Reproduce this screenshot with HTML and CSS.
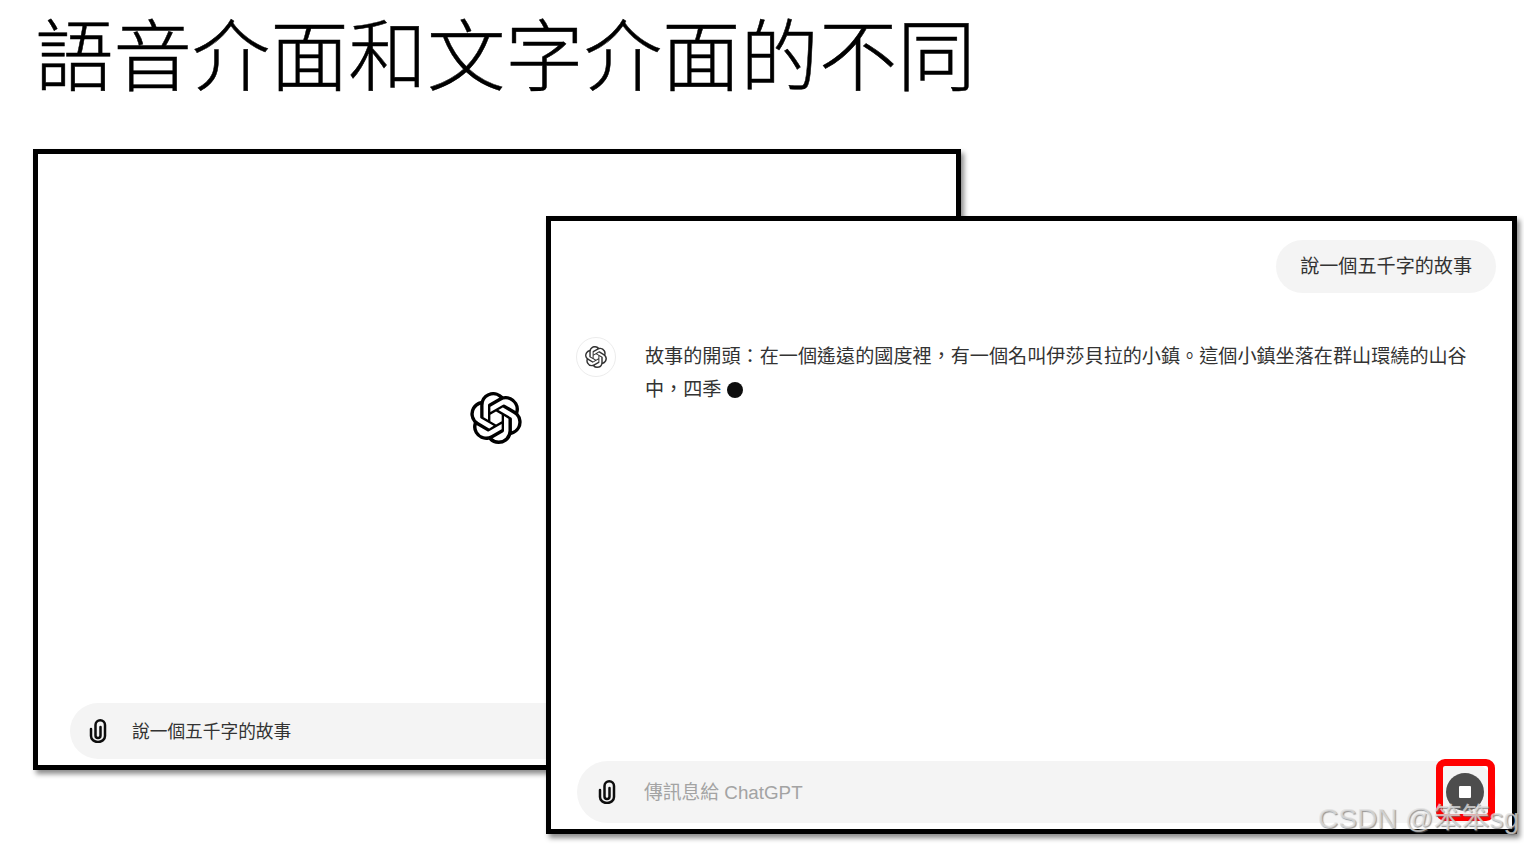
FILE: index.html
```html
<!DOCTYPE html>
<html lang="zh-Hant">

<head>
  <meta charset="UTF-8" />
  <meta name="viewport" content="width=device-width, initial-scale=1.0"/>
  <title>語音介面和文字介面的不同</title>
  <link rel="stylesheet" href="styles.css">
</head>

<body>
  <svg class="defs" width="0" height="0">
    <symbol id="logo" viewBox="0 0 24 24">
      <path d="M22.2819 9.8211a5.9847 5.9847 0 0 0-.5157-4.9108 6.0462 6.0462 0 0 0-6.5098-2.9A6.0651 6.0651 0 0 0 4.9807 4.1818a5.9847 5.9847 0 0 0-3.9977 2.9 6.0462 6.0462 0 0 0 .7427 7.0966 5.98 5.98 0 0 0 .511 4.9107 6.051 6.051 0 0 0 6.5146 2.9001A5.9847 5.9847 0 0 0 13.2599 24a6.0557 6.0557 0 0 0 5.7718-4.2058 5.9894 5.9894 0 0 0 3.9977-2.9001 6.0557 6.0557 0 0 0-.7475-7.0729zm-9.022 12.6081a4.4755 4.4755 0 0 1-2.8764-1.0408l.1419-.0804 4.7783-2.7582a.7948.7948 0 0 0 .3927-.6813v-6.7369l2.02 1.1686a.071.071 0 0 1 .038.052v5.5826a4.504 4.504 0 0 1-4.4945 4.4944zm-9.6607-4.1254a4.4708 4.4708 0 0 1-.5346-3.0137l.142.0852 4.783 2.7582a.7712.7712 0 0 0 .7806 0l5.8428-3.3685v2.3324a.0804.0804 0 0 1-.0332.0615L9.74 19.9502a4.4992 4.4992 0 0 1-6.1408-1.6464zM2.3408 7.8956a4.485 4.485 0 0 1 2.3655-1.9728V11.6a.7664.7664 0 0 0 .3879.6765l5.8144 3.3543-2.0201 1.1685a.0757.0757 0 0 1-.071 0l-4.8303-2.7865A4.504 4.504 0 0 1 2.3408 7.872zm16.5963 3.8558L13.1038 8.364 15.1192 7.2a.0757.0757 0 0 1 .071 0l4.8303 2.7913a4.4944 4.4944 0 0 1-.6765 8.1042v-5.6772a.79.79 0 0 0-.407-.667zm2.0107-3.0231l-.142-.0852-4.7735-2.7818a.7759.7759 0 0 0-.7854 0L9.409 9.2297V6.8974a.0662.0662 0 0 1 .0284-.0615l4.8303-2.7866a4.4992 4.4992 0 0 1 6.6802 4.66zM8.3065 12.863l-2.02-1.1638a.0804.0804 0 0 1-.038-.0567V6.0742a4.4992 4.4992 0 0 1 7.3757-3.4537l-.142.0805L8.704 5.459a.7948.7948 0 0 0-.3927.6813zm1.0976-2.3654l2.602-1.4998 2.6069 1.4998v2.9994l-2.5974 1.4997-2.6067-1.4997Z"/>
    </symbol>
    <symbol id="clip" viewBox="0 0 18 24">
      <path d="M2 10v7a7 6 0 0 0 14 0V6a4.75 4.75 0 0 0-9.5 0v10.5a2.5 2.5 0 0 0 5 0V8" fill="none" stroke="currentColor" stroke-width="2.5" stroke-linecap="round"/>
    </symbol>
  </svg>

  <div class="slide">
    <h1 class="title">語音介面和文字介面的不同</h1>

    <!-- left window: voice mode -->
    <div class="window window-voice">
      <div class="voice-area">
        <svg class="voice-logo"><use href="#logo"/></svg>
      </div>
      <div class="input-bar input-bar-voice">
        <svg class="clip"><use href="#clip"/></svg>
        <span class="prompt">說一個五千字的故事</span>
      </div>
    </div>

    <!-- right window: text mode -->
    <div class="window window-text">
      <div class="chat">
        <div class="bubble">說一個五千字的故事</div>
        <div class="answer">
          <div class="avatar"><svg class="avatar-logo"><use href="#logo"/></svg></div>
          <p class="answer-text">故事的開頭：在一個遙遠的國度裡，有一個名叫伊莎貝拉的小鎮。這個小鎮坐落在群山環繞的山谷中，四季 <span class="cursor"></span></p>
        </div>
      </div>
      <div class="input-bar input-bar-text">
        <svg class="clip"><use href="#clip"/></svg>
        <span class="placeholder">傳訊息給 ChatGPT</span>
        <div class="stop"><span class="stop-square"></span></div>
      </div>
    </div>

    <div class="highlight"></div>
    <div class="watermark">CSDN @笨笨sg</div>
  </div>
</body>

</html>
```

FILE: styles.css
```css
html, body { margin: 0; padding: 0; background: #ffffff; }
body { font-family: "Liberation Sans", "Noto Sans CJK TC", sans-serif; color: #333333; overflow: hidden; }
.defs { position: absolute; }
.slide { position: relative; width: 1524px; height: 845px; overflow: hidden; }
.title {
  margin: 0;
  padding: 0 0 0 35px;
  font-family: "Noto Sans CJK TC", sans-serif;
  font-size: 78.4px;
  font-weight: 300;
  line-height: 102px;
  height: 110px;
  color: #000000;
  -webkit-text-stroke: 0.5px #000000;
  white-space: nowrap;
}

.window {
  position: absolute;
  box-sizing: border-box;
  display: flex;
  flex-direction: column;
  background: #ffffff;
  border: 5px solid #000000;
  box-shadow: 3px 4px 5px rgba(0, 0, 0, 0.45);
}
.window-voice { left: 33px; top: 149px; width: 928px; height: 621px; padding: 0 6px 6px 32px; }
.window-text { left: 546px; top: 216px; width: 971px; height: 618px; padding: 19px 16px 6px 26px; }

.voice-area { flex: 1; display: flex; align-items: center; justify-content: center; padding: 0 0 22px 0; margin-left: -28px; }
.voice-logo { width: 52px; height: 52px; fill: #000000; }

.input-bar {
  display: flex;
  align-items: center;
  background: #f4f4f4;
  border-radius: 31px;
  font-size: 17.7px;
}
.input-bar-voice { height: 56px; padding-left: 19px; }
.input-bar-voice .clip { margin-right: 25px; }
.prompt { padding-bottom: 2px; }
.input-bar-text { height: 62px; padding: 0 12px 0 21px; font-size: 18.8px; }
.input-bar-text .clip { margin-right: 28px; }
.clip { width: 18px; height: 24px; color: #0d0d0d; flex-shrink: 0; }
.placeholder { color: #a3a3a3; flex: 1; padding-bottom: 3px; }

.stop {
  width: 38px;
  height: 38px;
  border-radius: 50%;
  background: #4d4d4d;
  display: flex;
  align-items: center;
  justify-content: center;
}
.stop-square { width: 12px; height: 12px; background: #ffffff; border-radius: 1px; }

.chat { flex: 1; display: flex; flex-direction: column; }
.bubble {
  align-self: flex-end;
  height: 53px;
  line-height: 53px;
  padding: 0 24px;
  background: #f4f4f4;
  border-radius: 27px;
  font-size: 19.1px;
}
.answer { display: flex; gap: 29px; margin: 44px 0 0 -1px; }
.avatar {
  box-sizing: border-box;
  width: 40px;
  height: 40px;
  border: 1px solid #ececec;
  border-radius: 50%;
  display: flex;
  align-items: center;
  justify-content: center;
  flex-shrink: 0;
}
.avatar-logo { width: 22px; height: 22px; fill: #333333; }
.answer-text { margin: 3px 0 0 0; width: 830px; font-size: 19.13px; line-height: 33px; }
.cursor { display: inline-block; width: 16px; height: 16px; border-radius: 50%; background: #0d0d0d; vertical-align: -2px; }

.highlight {
  position: absolute;
  box-sizing: border-box;
  left: 1436px;
  top: 759px;
  width: 59px;
  height: 62px;
  border: 7px solid #ff0000;
  border-radius: 9px;
}
.watermark {
  position: absolute;
  left: 1318px;
  top: 802px;
  font-size: 28px;
  line-height: 34px;
  white-space: nowrap;
  color: rgba(225, 225, 225, 0.75);
  text-shadow: 1px 1px 1px rgba(110, 110, 110, 0.7);
}
```
